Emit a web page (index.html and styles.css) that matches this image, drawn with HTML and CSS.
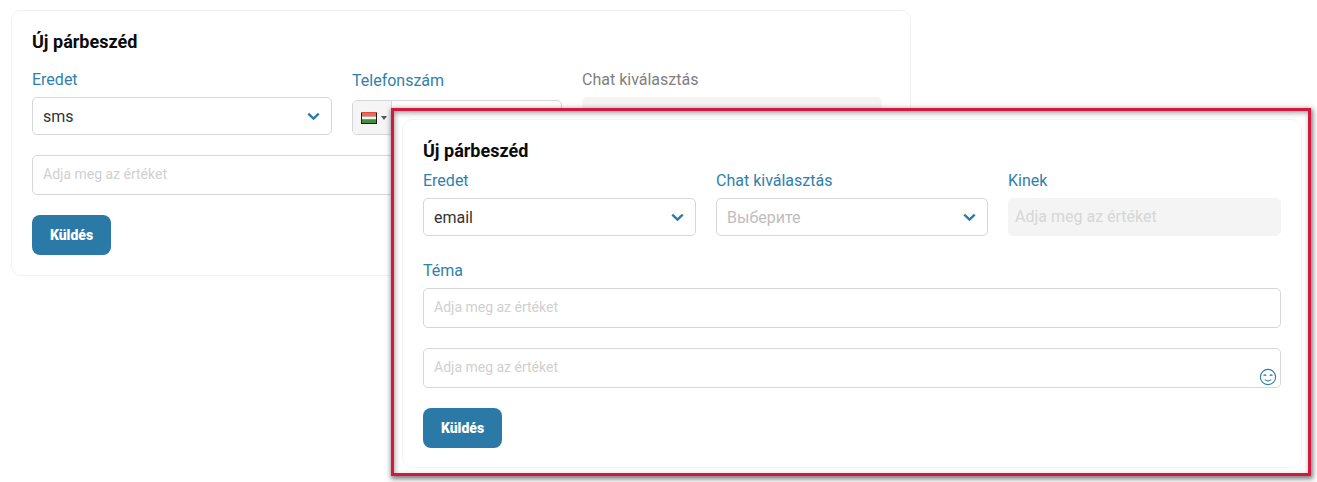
FILE: index.html
```html
<!DOCTYPE html>
<html lang="hu">
<head>
<meta charset="utf-8">
<title>Új párbeszéd</title>
<link rel="stylesheet" href="styles.css">
</head>
<body>
<section class="card card-base">
  <h2 class="title">Új párbeszéd</h2>
  <div class="row row-sms">
    <div class="field">
      <label class="label">Eredet</label>
      <div class="control select"><span class="value">sms</span>
        <svg class="chev" viewBox="0 0 12 8"><path d="M1.2 1.4 6 6l4.8-4.6"/></svg></div>
    </div>
    <div class="field field-phone">
      <label class="label">Telefonszám</label>
      <div class="control phone">
        <div class="flagbox">
          <svg class="flag" viewBox="0 0 16 12"><rect width="16" height="12" fill="#1a1a1a"/><rect y="0" width="16" height="1" fill="#d9483f"/><rect x="1" y="1" width="14" height="3.4" fill="#e8675f"/><rect x="1" y="4.4" width="14" height="3.2" fill="#f4f4ec"/><rect x="1" y="7.6" width="14" height="3.4" fill="#3f8f3c"/></svg>
          <span class="caret"></span>
        </div>
      </div>
    </div>
    <div class="field">
      <label class="label label-muted">Chat kiválasztás</label>
      <div class="control disabled"></div>
    </div>
  </div>
  <div class="control area"><span class="placeholder">Adja meg az értéket</span></div>
  <button class="send" type="button">Küldés</button>
</section>

<div class="highlight">
  <section class="card card-over">
    <h2 class="title">Új párbeszéd</h2>
    <div class="row row-email">
      <div class="field">
        <label class="label">Eredet</label>
        <div class="control select"><span class="value">email</span>
          <svg class="chev" viewBox="0 0 12 8"><path d="M1.2 1.4 6 6l4.8-4.6"/></svg></div>
      </div>
      <div class="field">
        <label class="label">Chat kiválasztás</label>
        <div class="control select"><span class="value value-empty">Выберите</span>
          <svg class="chev" viewBox="0 0 12 8"><path d="M1.2 1.4 6 6l4.8-4.6"/></svg></div>
      </div>
      <div class="field">
        <label class="label">Kinek</label>
        <div class="control disabled"><span class="placeholder-big">Adja meg az értéket</span></div>
      </div>
    </div>
    <div class="field field-topic">
      <label class="label">Téma</label>
      <div class="control area"><span class="placeholder">Adja meg az értéket</span></div>
    </div>
    <div class="control area area-emoji"><span class="placeholder">Adja meg az értéket</span>
      <svg class="smile" viewBox="0 0 18 18"><circle cx="9" cy="9" r="7.6"/><path d="M4.6 7.6c.7-1 1.9-1 2.6 0M10.8 7.6c.7-1 1.9-1 2.6 0M5.8 11.6c1.8 1.5 4.6 1.5 6.4 0"/></svg>
    </div>
    <button class="send" type="button">Küldés</button>
  </section>
</div>
</body>
</html>
```
FILE: styles.css
```css
* { box-sizing: border-box; }
html, body { margin: 0; padding: 0; }
body {
  width: 1317px;
  height: 482px;
  overflow: hidden;
  background: #fff;
  font-family: Roboto, "Liberation Sans", sans-serif;
  position: relative;
  padding: 10px 0 0 11px;
}
.card {
  background: #fff;
  border: 1px solid #f1f1f1;
  border-radius: 10px;
  padding: 20px;
}
.card-base { width: 900px; height: 266px; }
.title {
  margin: 0;
  font-size: 18px;
  line-height: 22px;
  font-weight: 700;
  color: #0b0b0b;
}
.row { display: grid; column-gap: 20px; }
.row-sms { grid-template-columns: 300px 210px 300px; margin-top: 18px; width: 850px; }
.row-email { grid-template-columns: 273px 272px 273px; margin-top: 10px; }
.label {
  display: block;
  font-size: 16px;
  line-height: 18px;
  color: #2f81ad;
  margin-bottom: 8px;
}
.label-muted { color: #808080; }
.field-phone { padding-top: 1px; }
.field-phone .label { margin-bottom: 10px; }
.control {
  display: flex;
  align-items: center;
  height: 38px;
  border: 1px solid #d6d6d6;
  border-radius: 5px;
  background: #fff;
  position: relative;
}
.select { padding: 0 11px 0 10px; justify-content: space-between; }
.value { font-size: 16px; color: #333; }
.value-empty { color: #bdbdbd; }
.chev { width: 13px; height: 9px; fill: none; stroke: #2a7ba8; stroke-width: 2.2; }
.phone { height: 35px; overflow: hidden; }
.flagbox {
  display: flex;
  align-items: center;
  gap: 4px;
  height: 100%;
  width: 39px;
  padding-left: 8px;
  background: #f5f5f5;
  border-right: 1px solid #d6d6d6;
}
.flag { width: 16px; height: 12px; }
.caret {
  width: 0;
  height: 0;
  border-left: 3px solid transparent;
  border-right: 3px solid transparent;
  border-top: 4px solid #555;
}
.disabled { background: #f4f4f4; border-color: #f4f4f4; padding: 0 0 2px 6px; }
.placeholder-big { font-size: 16px; color: #d6d6d6; }
.area { height: 40px; padding: 0 0 2px 10px; margin-top: 20px; width: 100%; }
.card-base .area { width: 850px; }
.placeholder { font-size: 14px; color: #d0d0d0; }
.send {
  display: block;
  margin-top: 20px;
  width: 79px;
  height: 40px;
  padding: 0;
  border: 0;
  border-radius: 8px;
  background: #2a79a6;
  color: #fff;
  font: 900 14px Roboto, "Liberation Sans", sans-serif;
}
.highlight {
  position: absolute;
  left: 391px;
  top: 108px;
  width: 920px;
  height: 368px;
  padding: 8px 7px 5px 8px;
  border: 3px solid #d5173f;
  background: #fff;
  box-shadow: 1px 2px 5px 1px rgba(50, 50, 50, .65), inset 1px 2px 5px rgba(50, 50, 50, .45);
}
.card-over { width: 900px; height: 349px; padding: 20px 20px 0; border-color: #f4f4f4; }
.field-topic { margin-top: 26px; }
.field-topic .area { margin-top: 0; }
.area-emoji { margin-top: 20px; }
.smile {
  position: absolute;
  right: 3px;
  bottom: 1px;
  width: 18px;
  height: 18px;
  fill: none;
  stroke: #2a7ba8;
  stroke-width: 1.1;
}
```
